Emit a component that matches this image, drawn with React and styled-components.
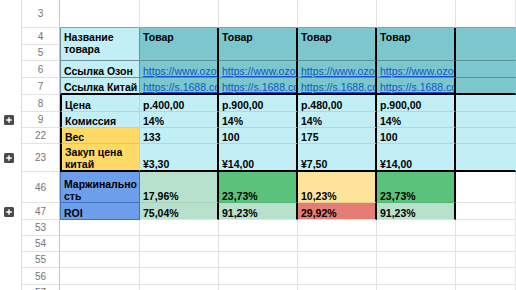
import React from 'react';
import styled, { createGlobalStyle } from 'styled-components';

const CYAN = '#c2eef5';
const TEAL = '#7bc7cd';
const YELLOW = '#ffd966';
const BLUE = '#6d9eeb';
const GRID = '#e2e2e2';
const CYAN_LINE = '#a9dae1';
const TEAL_LINE = '#5e8f97';
const LABEL_EDGE = '#6f8f9b';
const BLUE_EDGE = '#3f70c2';
const SOFT = 'rgba(0,0,0,0.08)';

const Global = createGlobalStyle`
  body {
    margin: 0;
    background: #fff;
    overflow: hidden;
  }
`;

const edge = v => (v === 'thick' ? '2px solid #000' : `1px solid ${v}`);

const Sheet = styled.div`
  display: grid;
  width: 516px;
  grid-template-columns: 21px 39px 80px 79px 79px 79px 79px 1fr;
  grid-template-rows: 28px 17px 16px 17px 17px 17px 16px 16px 28px 31px 17px 16px 16px 16px 17px 16px;
`;

const Gutter = styled.div`
  display: flex;
  align-items: center;
  padding-left: 4px;
  background: #fff;
`;

const RowNum = styled.div`
  box-sizing: border-box;
  display: flex;
  align-items: center;
  justify-content: center;
  border-left: 1px solid #dcdcdc;
  border-right: 1px solid #c4c4c4;
  border-bottom: 1px solid #e3e3e3;
  font-family: 'Liberation Sans', Arial, sans-serif;
  font-size: 10px;
  color: #757575;
  background: #fff;
`;

const Cell = styled.div`
  box-sizing: border-box;
  min-width: 0;
  overflow: hidden;
  grid-row: ${p => (p.$span ? `span ${p.$span}` : 'auto')};
  display: flex;
  flex-direction: column;
  justify-content: ${p => (p.$top ? 'flex-start' : 'flex-end')};
  padding: ${p => (p.$top ? '3px 3px 0' : '0 3px')};
  background: ${p => p.$bg || '#fff'};
  border-right: ${p => edge(p.$rb || GRID)};
  border-bottom: ${p => edge(p.$bb || GRID)};
  border-left: ${p => (p.$lb ? edge(p.$lb) : 'none')};
  font-family: 'Liberation Sans', Arial, sans-serif;
  font-size: 10.5px;
  line-height: 12px;
  font-weight: 700;
  white-space: nowrap;
  color: #000;
`;

const Link = styled.span`
  font-weight: 400;
  color: #1155cc;
  text-decoration: underline;
`;

const Expand = () => (
  <svg width="10" height="10" viewBox="0 0 10 10">
    <rect width="10" height="10" rx="1.5" fill="#4a4a4a" />
    <path d="M5 2.2v5.6M2.2 5h5.6" stroke="#fff" strokeWidth="1.4" />
  </svg>
);

const products = [
  { price: 'р.400,00', fee: '14%', weight: '133', cost: '¥3,30', margin: '17,96%', roi: '75,04%', mBg: '#b7e1cd', rBg: '#b7e1cd' },
  { price: 'р.900,00', fee: '14%', weight: '100', cost: '¥14,00', margin: '23,73%', roi: '91,23%', mBg: '#5ac37b', rBg: '#b7e1cd' },
  { price: 'р.480,00', fee: '14%', weight: '175', cost: '¥7,50', margin: '10,23%', roi: '29,92%', mBg: '#fee49b', rBg: '#e67c73' },
  { price: 'р.900,00', fee: '14%', weight: '100', cost: '¥14,00', margin: '23,73%', roi: '91,23%', mBg: '#5ac37b', rBg: '#b7e1cd' },
];

const infoRows = [
  { num: '8', label: 'Цена', key: 'price', bg: CYAN },
  { num: '9', label: 'Комиссия', key: 'fee', bg: CYAN, expand: true },
  { num: '22', label: 'Вес', key: 'weight', bg: YELLOW },
  { num: '23', label: <>Закуп цена<br />китай</>, key: 'cost', bg: YELLOW, expand: true, last: true },
];

const Blank = ({ num, top }) => (
  <>
    <Gutter />
    <RowNum>{num}</RowNum>
    {[0, 1, 2, 3, 4, 5].map(i => (
      <Cell key={i} $bb={top ? '#8d9c9f' : GRID} />
    ))}
  </>
);

export default function App() {
  return (
    <>
      <Global />
      <Sheet>
        <Blank num="3" top />

        <Gutter />
        <RowNum>4</RowNum>
        <Cell $span={2} $top $bg={CYAN} $lb={LABEL_EDGE} $rb={LABEL_EDGE} $bb={LABEL_EDGE}>
          Название<br />товара
        </Cell>
        {products.map((p, i) => (
          <Cell key={i} $span={2} $top $bg={TEAL} $rb="thick" $bb={TEAL_LINE}>Товар</Cell>
        ))}
        <Cell $span={2} $bg={TEAL} $bb={TEAL_LINE} $rb={TEAL} />
        <Gutter />
        <RowNum>5</RowNum>

        {[
          { num: '6', label: 'Ссылка Озон', url: 'https://www.ozon.ru/product/' },
          { num: '7', label: 'Ссылка Китай', url: 'https://s.1688.com/selloffer/', last: true },
        ].map(r => (
          <React.Fragment key={r.num}>
            <Gutter />
            <RowNum>{r.num}</RowNum>
            <Cell $bg={CYAN} $lb={LABEL_EDGE} $rb={LABEL_EDGE} $bb={r.last ? 'thick' : LABEL_EDGE}>{r.label}</Cell>
            {products.map((p, i) => (
              <Cell key={i} $bg={TEAL} $rb="thick" $bb={r.last ? 'thick' : TEAL_LINE}>
                <Link>{r.url}</Link>
              </Cell>
            ))}
            <Cell $bg={TEAL} $rb={TEAL} $bb={r.last ? 'thick' : TEAL_LINE} />
          </React.Fragment>
        ))}

        {infoRows.map(r => (
          <React.Fragment key={r.num}>
            <Gutter>{r.expand && <Expand />}</Gutter>
            <RowNum>{r.num}</RowNum>
            <Cell $bg={r.bg} $lb="thick" $rb={CYAN_LINE} $bb={r.last ? 'thick' : r.bg === YELLOW ? '#e8c45a' : CYAN_LINE}>
              {r.label}
            </Cell>
            {products.map((p, i) => (
              <Cell key={i} $bg={CYAN} $rb="thick" $bb={r.last ? 'thick' : CYAN_LINE}>{p[r.key]}</Cell>
            ))}
            <Cell $bg={CYAN} $rb={CYAN} $bb={r.last ? 'thick' : CYAN_LINE} />
          </React.Fragment>
        ))}

        <Gutter />
        <RowNum>46</RowNum>
        <Cell $bg={BLUE} $lb={BLUE_EDGE} $rb={BLUE_EDGE} $bb={BLUE_EDGE}>Маржинально<br />сть</Cell>
        {products.map((p, i) => (
          <Cell key={i} $bg={p.mBg} $rb="thick" $bb={SOFT}>{p.margin}</Cell>
        ))}
        <Cell />

        <Gutter><Expand /></Gutter>
        <RowNum>47</RowNum>
        <Cell $bg={BLUE} $lb={BLUE_EDGE} $rb={BLUE_EDGE} $bb={BLUE_EDGE}>ROI</Cell>
        {products.map((p, i) => (
          <Cell key={i} $bg={p.rBg} $rb="thick">{p.roi}</Cell>
        ))}
        <Cell />

        <Blank num="53" />
        <Blank num="54" />
        <Blank num="55" />
        <Blank num="56" />
        <Blank num="57" />
      </Sheet>
    </>
  );
}
